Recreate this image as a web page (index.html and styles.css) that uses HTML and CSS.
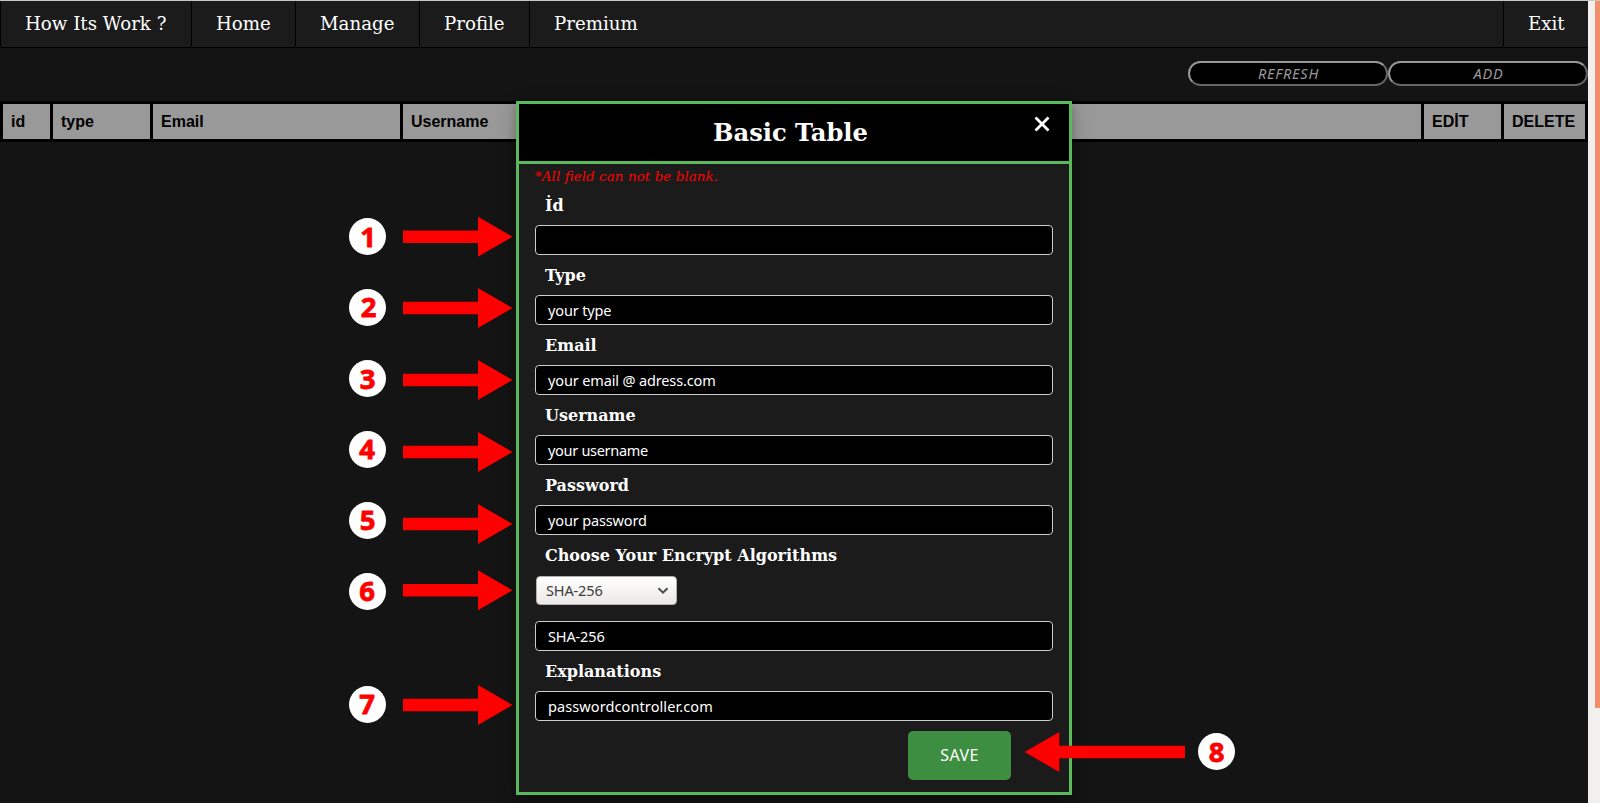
FILE: index.html
```html
<!DOCTYPE html>
<html lang="en">
<head>
<meta charset="utf-8">
<title>Basic Table</title>
<link rel="stylesheet" href="styles.css">
</head>
<body>
<div class="screen">
  <div class="page">
    <nav class="nav">
      <a class="nav-item nav-how">How Its Work ?</a>
      <a class="nav-item nav-home">Home</a>
      <a class="nav-item nav-manage">Manage</a>
      <a class="nav-item nav-profile">Profile</a>
      <a class="nav-item nav-premium">Premium</a>
      <a class="nav-item nav-exit">Exit</a>
    </nav>
    <div class="actions">
      <button class="pill">REFRESH</button><button class="pill">ADD</button>
    </div>
    <div class="table-head">
      <div>id</div><div>type</div><div>Email</div><div>Username</div><div>EDİT</div><div>DELETE</div>
    </div>
  </div>
  <div class="scrollbar"><div class="thumb"></div></div>

  <section class="modal">
    <header class="modal-head">
      <h2>Basic Table</h2>
      <svg class="close" viewBox="0 0 16 16"><path d="M1.5 1.5L14.5 14.5M14.5 1.5L1.5 14.5"/></svg>
    </header>
    <form class="form">
      <p class="note">*All field can not be blank.</p>
      <label>İd</label>
      <div class="field"></div>
      <label>Type</label>
      <div class="field snug">your type</div>
      <label>Email</label>
      <div class="field snug">your email @ adress.com</div>
      <label>Username</label>
      <div class="field tight">your username</div>
      <label>Password</label>
      <div class="field snug">your password</div>
      <label>Choose Your Encrypt Algorithms</label>
      <div class="select snug"><span>SHA-256</span>
        <svg viewBox="0 0 12 8"><path d="M1.5 1.2L6 5.7L10.5 1.2"/></svg>
      </div>
      <div class="field snug">SHA-256</div>
      <label>Explanations</label>
      <div class="field loose">passwordcontroller.com</div>
      <button type="button" class="save">SAVE</button>
    </form>
  </section>

  <svg class="callouts" viewBox="0 0 1600 803">
    <defs>
      <path id="arrow" d="M0 -6.2H75V-20L109.5 0L75 20V6.2H0Z"/>
    </defs>
    <g class="arrows">
      <use href="#arrow" x="403" y="236.7"/>
      <use href="#arrow" x="403" y="308"/>
      <use href="#arrow" x="403" y="380"/>
      <use href="#arrow" x="403" y="452"/>
      <use href="#arrow" x="403" y="524"/>
      <use href="#arrow" x="403" y="590.3"/>
      <use href="#arrow" x="403" y="705"/>
      <path d="M1185 745.8H1059.3V732L1024.5 752L1059.3 772V758.2H1185Z"/>
    </g>
    <g class="discs">
      <circle cx="367.5" cy="236.5" r="18.5"/>
      <circle cx="367.5" cy="307.5" r="18.5"/>
      <circle cx="367.5" cy="378.5" r="18.5"/>
      <circle cx="367.5" cy="449.5" r="18.5"/>
      <circle cx="367.5" cy="520.5" r="18.5"/>
      <circle cx="367.5" cy="591.5" r="18.5"/>
      <circle cx="367.5" cy="704.5" r="18.5"/>
      <circle cx="1216.5" cy="751.5" r="18.5"/>
    </g>
    <g class="digits">
      <text x="368" y="246.5">1</text>
      <text x="368.5" y="317.3">2</text>
      <text x="367.5" y="388.8">3</text>
      <text x="367" y="459.3">4</text>
      <text x="367.5" y="529.8">5</text>
      <text x="367" y="600.8">6</text>
      <text x="367" y="714.3">7</text>
      <text x="1216.5" y="761.8">8</text>
    </g>
  </svg>
</div>
</body>
</html>
```
FILE: styles.css
```css
* { box-sizing: border-box; }
body { margin: 0; background: #141414; }

.screen {
  position: relative;
  display: flex;
  width: 1600px;
  height: 803px;
  overflow: hidden;
  border-top: 1px solid #c9c8c1;
  background: #141414;
}
.page { width: 1588px; }

.nav {
  display: flex;
  height: 47px;
  background: #1b1b1b;
  border-left: 1px solid #000;
  border-bottom: 1px solid #000;
}
.nav-item {
  padding-left: 24px;
  border-right: 1px solid #000;
  color: #fff;
  font: 18.2px/45px "DejaVu Serif", serif;
  white-space: nowrap;
}
.nav-how { width: 191px; }
.nav-home { width: 104px; }
.nav-manage { width: 124px; }
.nav-profile { width: 110px; }
.nav-premium { border-right: 0; }
.nav-exit { width: 85px; margin-left: auto; border-right: 0; border-left: 1px solid #000; }

.actions { display: flex; justify-content: flex-end; padding-top: 13px; height: 53px; }
.pill {
  width: 200px;
  height: 25px;
  padding: 0 0 0 1px;
  border: 2px solid;
  border-color: #999 #666 #666 #999;
  border-radius: 13px;
  background: #000;
  color: #999;
  font: italic 14.5px/21px "Noto Sans", sans-serif;
  letter-spacing: .8px;
}

.table-head {
  display: grid;
  grid-template-columns: 47px 97px 247px 1018px 77px 81px;
  gap: 3px;
  height: 41px;
  padding: 3px;
  background: #000;
}
.table-head div {
  padding-left: 8px;
  background: #999;
  color: #000;
  font: bold 16px/35px "Liberation Sans", sans-serif;
}

.scrollbar { display: flex; justify-content: flex-end; width: 12px; background: #f1f0ee; }
.thumb { width: 5px; height: 707px; background: #f28f6a; }

/* Dialog floats over the page */
.modal {
  position: absolute;
  left: 516px;
  top: 100px;
  width: 556px;
  height: 694px;
  border: 3px solid #5cb85c;
  background: #1b1b1b;
  box-shadow: 0 4px 8px rgba(0,0,0,.2), 0 6px 20px rgba(0,0,0,.19);
}
.modal-head {
  position: relative;
  height: 60px;
  border-bottom: 3px solid #5cb85c;
  background: #000;
}
.modal-head h2 {
  margin: 0;
  padding-right: 7px;
  color: #fff;
  text-align: center;
  font: bold 24.2px/57px "DejaVu Serif", serif;
}
.close { position: absolute; right: 19px; top: 12px; width: 16px; height: 16px; }
.close path { fill: none; stroke: #fff; stroke-width: 2.8; }

.form { display: flex; flex-direction: column; padding: 0 16px; color: #fff; }
.note { margin: 0; height: 21px; color: #f00; font: italic 13.6px/24px "DejaVu Serif", serif; }
label { padding-left: 10px; height: 40px; font: bold 16px/42px "DejaVu Serif", serif; }
.field {
  height: 30px;
  padding-left: 12px;
  border: 1px solid #ccc;
  border-radius: 4px;
  background: #000;
  font: 14.5px/29px "Noto Sans", sans-serif;
}
.snug { letter-spacing: -.14px; }
.tight { letter-spacing: -.3px; }
.loose { letter-spacing: .1px; }
.select {
  display: flex;
  align-items: center;
  justify-content: space-between;
  width: 141px;
  height: 29px;
  margin: 1px 0 16px 1px;
  padding: 0 7px 0 9px;
  border: 1px solid #b5b2ae;
  border-radius: 4px;
  background: linear-gradient(#fff, #ebe9e7);
  color: #3c3c3c;
  font: 14.5px/27px "Noto Sans", sans-serif;
}
.select svg { width: 12px; height: 8px; }
.select path { fill: none; stroke: #4a4a4a; stroke-width: 2; }
.save {
  align-self: flex-end;
  width: 103px;
  height: 49px;
  margin: 10px 42px 0 0;
  padding: 0;
  border: 0;
  border-radius: 5px;
  background: #3e8e41;
  color: #fff;
  font: 16px/49px "Noto Sans", sans-serif;
  letter-spacing: .4px;
}

/* Numbered callouts drawn over everything */
.callouts { position: absolute; left: 0; top: -1px; width: 1600px; height: 803px; }
.arrows { fill: #f00; }
.discs { fill: #fff; }
.digits {
  fill: #f00;
  stroke: #f00;
  stroke-width: .8;
  stroke-linejoin: round;
  font: 700 27.5px "Open Sans", sans-serif;
  text-anchor: middle;
}
```
